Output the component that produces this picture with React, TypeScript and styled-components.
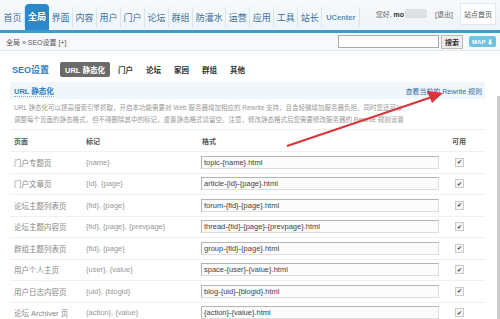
import * as React from 'react';
import styled, { createGlobalStyle, css } from 'styled-components';

const GlobalStyle = createGlobalStyle`
  html, body {
    margin: 0;
    padding: 0;
    background: #fff;
  }
  body {
    font-family: 'Liberation Sans', 'Noto Sans CJK SC', sans-serif;
    width: 500px;
    height: 319px;
    overflow: hidden;
  }
`;

const Page = styled.div`
  position: relative;
  width: 500px;
  height: 319px;
  overflow: hidden;
`;

const Header = styled.div`
  height: 30px;
  background: linear-gradient(#f7fafc, #eef4f8);
  display: flex;
  align-items: flex-end;
  justify-content: space-between;
  border-bottom: 3px solid #3b9bd2;
`;

const Nav = styled.div`
  display: flex;
  align-items: flex-end;
  height: 100%;
  padding-left: 1px;
  flex-shrink: 0;
`;

const NavItem = styled.div<{ active?: boolean }>`
  height: 20px;
  display: flex;
  align-items: center;
  padding: 0 2.5px;
  font-size: 9px;
  color: #3c6f99;
  white-space: nowrap;
  flex-shrink: 0;
  border-right: 1px solid #dbe5ec;
  margin-bottom: 3px;
  ${p =>
    p.active &&
    css`
      height: 24px;
      margin-bottom: 0;
      padding: 0 3px 2px;
      background: #2b88cc;
      color: #fff;
      font-weight: bold;
      border-radius: 4px 4px 0 0;
      border-right: none;
    `}
`;

const UcItem = styled(NavItem)`
  font-weight: bold;
  font-size: 7.5px;
  color: #5b8fb8;
  padding: 0 4px;
`;

const UserBox = styled.div`
  display: flex;
  align-items: center;
  gap: 4px;
  font-size: 7px;
  color: #666;
  height: 100%;
  padding: 0 4px 3px 0;
  box-sizing: border-box;
  white-space: nowrap;
`;

const Name = styled.b`
  color: #333;
`;

const Blur = styled.span`
  display: inline-block;
  width: 22px;
  height: 9px;
  background: #dde1e5;
  border-radius: 2px;
  margin-left: -3px;
`;

const Logout = styled.span`
  margin-left: 4px;
`;

const HomeBtn = styled.div`
  background: #fff;
  border: 1px solid #e2e8ec;
  padding: 5px 3px;
  font-size: 7px;
  color: #555;
  margin-left: 3px;
`;

const SubBar = styled.div`
  height: 17px;
  background: #f7fafc;
  border-bottom: 1px solid #dfe6eb;
  display: flex;
  align-items: center;
  padding: 0 4px 0 6px;
  font-size: 7px;
  color: #555;
`;

const Crumb = styled.div`
  flex: 1;
`;

const SearchInput = styled.div`
  width: 99px;
  height: 11px;
  border: 1px solid #aaa;
  background: #fff;
`;

const SearchBtn = styled.div`
  margin-left: 2px;
  padding: 1px 3px;
  border: 1px solid #bbb;
  background: #eee;
  font-size: 7px;
  font-weight: bold;
  color: #333;
`;

const MapBtn = styled.div`
  margin-left: 6px;
  padding: 1px 3px;
  background: #6fc3e0;
  color: #fff;
  font-size: 6px;
  font-weight: bold;
  border-radius: 2px;
`;

const Main = styled.div`
  padding: 11px 15px 0 10px;
`;

const TitleRow = styled.div`
  display: flex;
  align-items: center;
  gap: 3px;
  height: 14px;
  padding-left: 2px;
`;

const Title = styled.div`
  font-size: 9px;
  font-weight: bold;
  color: #2f7fc2;
  margin-right: 8px;
`;

const Tab = styled.div<{ active?: boolean }>`
  font-size: 7.5px;
  font-weight: bold;
  color: #333;
  padding: 2px 5px;
  ${p =>
    p.active &&
    css`
      background: #6b6b6b;
      color: #fff;
      border-radius: 2px;
    `}
`;

const SectionHead = styled.div`
  margin-top: 6px;
  height: 17px;
  background: #f0f6fa;
  display: flex;
  align-items: center;
  justify-content: space-between;
  padding: 0 3px 0 4px;
`;

const SectionTitle = styled.span`
  font-size: 7.5px;
  font-weight: bold;
  color: #2f7fc2;
  border-bottom: 1px dotted #8fb4d4;
`;

const SectionLink = styled.span`
  font-size: 7px;
  color: #2f6fa8;
`;

const Desc = styled.div`
  padding: 3px 4px 3px;
  font-size: 6.5px;
  line-height: 12px;
  color: #999;
  border-bottom: 1px solid #eee;
  white-space: nowrap;
`;

const Table = styled.div`
  display: grid;
  grid-template-columns: 72px 116px 250px 37px;
`;

const Cell = styled.div<{ head?: boolean }>`
  height: 20.5px;
  display: flex;
  align-items: center;
  padding-left: 4px;
  font-size: 7.5px;
  color: #999;
  border-bottom: 1px solid #eef0f2;
  white-space: nowrap;
  ${p =>
    p.head &&
    css`
      height: 21px;
      color: #555;
      font-weight: bold;
      font-size: 7px;
    `}
`;

const PageCell = styled(Cell)`
  color: #888;
`;

const FormatInput = styled.div`
  width: 234px;
  height: 11px;
  border: 1px solid #b5b5b5;
  border-bottom-color: #ddd;
  border-right-color: #ddd;
  background: #fbfbfb;
  font-size: 7.5px;
  color: #444;
  line-height: 11px;
  padding-left: 2px;
  margin-left: -1px;
`;

const Check = styled.div`
  width: 7px;
  height: 7px;
  border: 1px solid #ccc;
  background: #f4f4f4;
  margin-left: 3px;
  display: flex;
  align-items: center;
  justify-content: center;
  font-size: 6px;
  color: #333;
  line-height: 1;
`;

const Scroll = styled.div`
  position: absolute;
  right: 0;
  top: 96px;
  width: 3px;
  height: 223px;
  background: #c9c9c9;
`;

const Arrow = styled.svg`
  position: absolute;
  left: 0;
  top: 0;
  pointer-events: none;
`;

const navItems = ['首页', '全局', '界面', '内容', '用户', '门户', '论坛', '群组', '防灌水', '运营', '应用', '工具', '站长'];

const rows = [
  ['门户专题页', '{name}', 'topic-{name}.html'],
  ['门户文章页', '{id}, {page}', 'article-{id}-{page}.html'],
  ['论坛主题列表页', '{fid}, {page}', 'forum-{fid}-{page}.html'],
  ['论坛主题内容页', '{tid}, {page}, {prevpage}', 'thread-{tid}-{page}-{prevpage}.html'],
  ['群组主题列表页', '{fid}, {page}', 'group-{fid}-{page}.html'],
  ['用户个人主页', '{user}, {value}', 'space-{user}-{value}.html'],
  ['用户日志内容页', '{uid}, {blogid}', 'blog-{uid}-{blogid}.html'],
  ['论坛 Archiver 页', '{action}, {value}', '{action}-{value}.html'],
];

export default function App() {
  return (
    <Page>
      <GlobalStyle />
      <Header>
        <Nav>
          {navItems.map(n => (
            <NavItem key={n} active={n === '全局'}>
              {n}
            </NavItem>
          ))}
          <UcItem>UCenter</UcItem>
        </Nav>
        <UserBox>
          <span>
            您好, <Name>mo</Name>
          </span>
          <Blur />
          <Logout>[退出]</Logout>
          <HomeBtn>站点首页</HomeBtn>
        </UserBox>
      </Header>
      <SubBar>
        <Crumb>全局 » SEO设置 [+]</Crumb>
        <SearchInput />
        <SearchBtn>搜索</SearchBtn>
        <MapBtn>MAP ⬇</MapBtn>
      </SubBar>
      <Main>
        <TitleRow>
          <Title>SEO设置</Title>
          <Tab active>URL 静态化</Tab>
          <Tab>门户</Tab>
          <Tab>论坛</Tab>
          <Tab>家园</Tab>
          <Tab>群组</Tab>
          <Tab>其他</Tab>
        </TitleRow>
        <SectionHead>
          <SectionTitle>URL 静态化</SectionTitle>
          <SectionLink>查看当前的 Rewrite 规则</SectionLink>
        </SectionHead>
        <Desc>
          URL 静态化可以提高搜索引擎抓取，开启本功能需要对 Web 服务器增加相应的 Rewrite 支持，且会轻微增加服务器负担。同时您还可以
          <br />
          调整每个页面的静态格式，但不得删除其中的标记，重置静态格式请留空。注意，修改静态格式后您需要修改服务器的 Rewrite 规则设置
        </Desc>
        <Table>
          <Cell head>页面</Cell>
          <Cell head>标记</Cell>
          <Cell head>格式</Cell>
          <Cell head>可用</Cell>
          {rows.map(r => (
            <React.Fragment key={r[0]}>
              <PageCell>{r[0]}</PageCell>
              <Cell>{r[1]}</Cell>
              <Cell>
                <FormatInput>{r[2]}</FormatInput>
              </Cell>
              <Cell>
                <Check>✔</Check>
              </Cell>
            </React.Fragment>
          ))}
        </Table>
      </Main>
      <Scroll />
      <Arrow width="500" height="319">
        <line x1="287" y1="146" x2="432" y2="97" stroke="#d9363a" strokeWidth="2.2" />
        <polygon points="443,93 427,91 432,103" fill="#d9363a" />
      </Arrow>
    </Page>
  );
}
